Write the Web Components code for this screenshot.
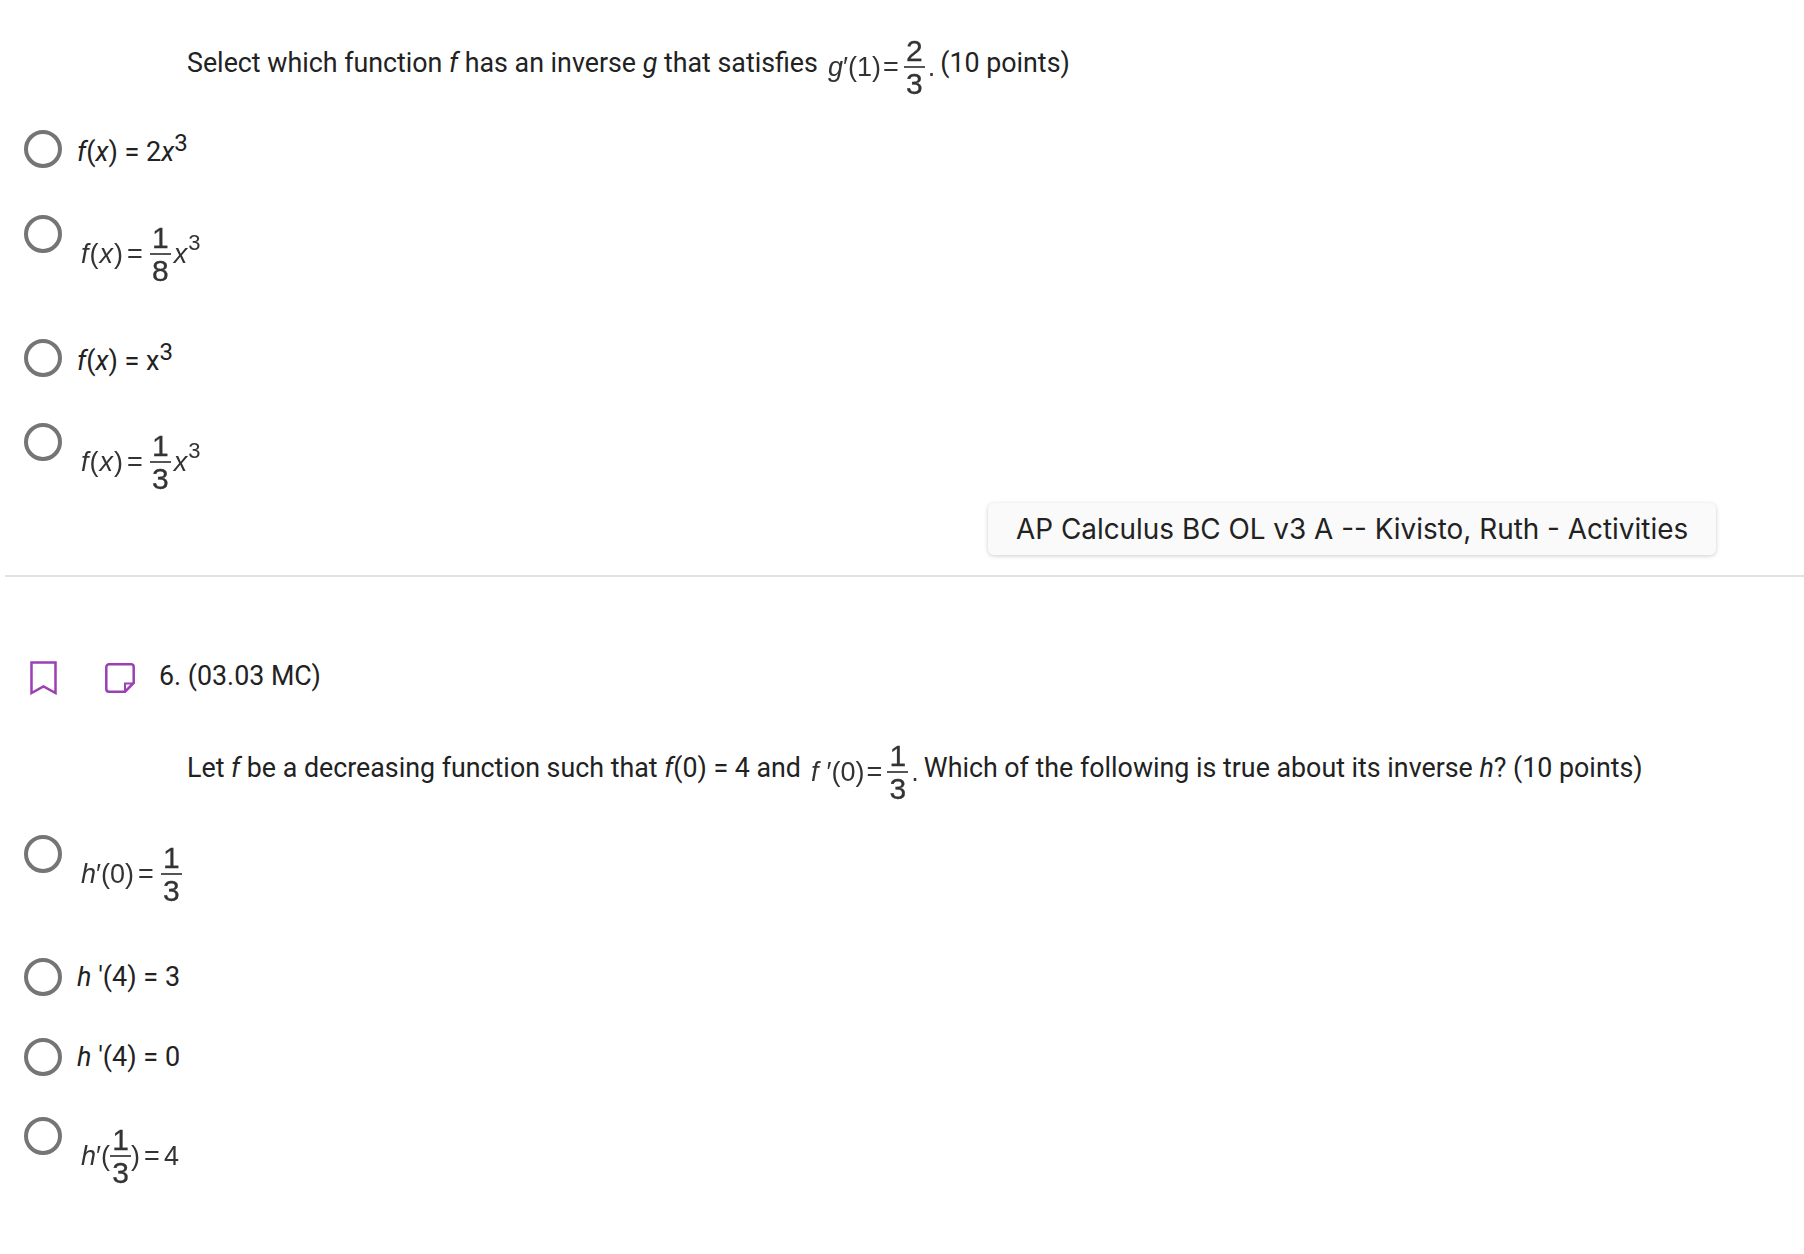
<!DOCTYPE html>
<html lang="en">
<head>
<meta charset="utf-8">
<title>Quiz</title>
<style>
	html, body { margin: 0; background: #fff; }
	body { font-family: Roboto, "Liberation Sans", sans-serif; color: #222; }
	main { display: flex; flex-direction: column; padding-top: 36px; }
</style>
</head>
<body>
<main>
	<q-prompt>
		<span>Select which function <i>f</i> has an inverse <i>g</i> that satisfies</span>
		<m-eq slot="eq"><i>g</i><span>′(1)</span><span class="eq">=</span><m-frac top="2" bottom="3"></m-frac><span>.</span></m-eq>
		<span slot="after">(10 points)</span>
	</q-prompt>

	<q-option style="--gap:47px;--nudge:3px"><i>f</i>(<i>x</i>) = 2<i>x</i><sup>3</sup></q-option>
	<q-option style="--gap:54px;--eq-track:1px;--eq-gap:3px" math><m-eq><i>f</i><span>(<i>x</i>)</span><span class="eq">=</span><m-frac top="1" bottom="8"></m-frac><i>x</i><sup>3</sup></m-eq></q-option>
	<q-option style="--gap:46px;--nudge:3px"><i>f</i>(<i>x</i>) = x<sup>3</sup></q-option>
	<q-option style="--gap:10px;--eq-track:1px;--eq-gap:3px" math><m-eq><i>f</i><span>(<i>x</i>)</span><span class="eq">=</span><m-frac top="1" bottom="3"></m-frac><i>x</i><sup>3</sup></m-eq></q-option>

	<course-chip>AP Calculus BC OL v3 A -- Kivisto, Ruth - Activities</course-chip>
	<q-divider></q-divider>
	<q-header>6. (03.03 MC)</q-header>

	<q-prompt>
		<span>Let <i>f</i> be a decreasing function such that <i>f</i>(0) = 4 and</span>
		<m-eq slot="eq"><i style="margin-right:8px">f</i><span>′(0)</span><span class="eq">=</span><m-frac top="1" bottom="3"></m-frac><span>.</span></m-eq>
		<span slot="after">Which of the following is true about its inverse <i>h</i>? (10 points)</span>
	</q-prompt>

	<q-option style="--gap:53px;--eq-gap:4px" math><m-eq><i>h</i><span>′(0)</span><span class="eq">=</span><m-frac top="1" bottom="3"></m-frac></m-eq></q-option>
	<q-option style="--gap:42px"><i>h</i> '(4) = 3</q-option>
	<q-option style="--gap:41px"><i>h</i> '(4) = 0</q-option>
	<q-option style="--eq-gap:4px" math><m-eq><i>h</i><span>′(</span><m-frac top="1" bottom="3" tight></m-frac><span>)</span><span class="eq">=</span><span>4</span></m-eq></q-option>
</main>

<script>
class MFrac extends HTMLElement {
	connectedCallback() {
		this.attachShadow( { mode: 'open' } )
		this.shadowRoot.innerHTML = `
			<style>
				:host {
					display: inline-flex;
					flex-direction: column;
					align-items: center;
					margin: 0 3px;
					font-size: 30px;
					line-height: 29px;
					letter-spacing: 0;
					-webkit-text-stroke: 0.3px currentColor;
				}
				:host([tight]) { margin: 0; }
				.line {
					align-self: stretch;
					height: 2px;
					min-width: 21px;
					background: #555;
					margin: 1px 0;
				}
			</style>
			<span>${this.getAttribute('top')}</span>
			<div class="line"></div>
			<span>${this.getAttribute('bottom')}</span>
		`
	}
}
customElements.define( 'm-frac', MFrac )

class MEq extends HTMLElement {
	constructor() {
		super()
		this.attachShadow( { mode: 'open' } ).innerHTML = `
			<style>
				:host {
					display: inline-flex;
					align-items: center;
					font-family: "Liberation Sans", Arial, sans-serif;
					font-size: 27px;
					letter-spacing: var(--eq-track, 0);
					color: #333;
					filter: blur(0.4px);
					white-space: pre;
				}
				::slotted(.eq) { margin: 0 var(--eq-gap, 2px); }
				::slotted(sup) {
					font-size: 22px;
					line-height: 0;
					margin: -22px 0 0 0;
				}
			</style>
			<slot></slot>
		`
	}
}
customElements.define( 'm-eq', MEq )

class QPrompt extends HTMLElement {
	constructor() {
		super()
		this.attachShadow( { mode: 'open' } ).innerHTML = `
			<style>
				:host {
					display: flex;
					align-items: center;
					padding-left: 187px;
					margin-bottom: 32px;
					font-size: 26.8px;
					white-space: nowrap;
					color: #222;
				}
				.text { padding-bottom: 9px; }
				.eq { margin: 0 5px 0 10px; display: flex; }
			</style>
			<div class="text"><slot></slot></div>
			<div class="eq"><slot name="eq"></slot></div>
			<div class="text"><slot name="after"></slot></div>
		`
	}
}
customElements.define( 'q-prompt', QPrompt )

class QOption extends HTMLElement {
	constructor() {
		super()
		this.attachShadow( { mode: 'open' } ).innerHTML = `
			<style>
				:host {
					display: flex;
					align-items: center;
					gap: 15px;
					padding-left: 24px;
					margin-bottom: var(--gap, 0);
					font-size: 27px;
					min-height: 38px;
					line-height: 38px;
				}
				:host([math]) { align-items: flex-start; }
				.radio {
					flex: none;
					width: 38px;
					height: 38px;
					box-sizing: border-box;
					border: 4px solid #757575;
					border-radius: 50%;
				}
				.label {
					white-space: nowrap;
					margin: var(--nudge, 0px) 0 calc(-1 * var(--nudge, 0px));
				}
				:host([math]) .label {
					display: flex;
					margin: 8px 0 0 4px;
					line-height: 1;
				}
				::slotted(sup) {
					font-size: 24px;
					line-height: 0;
				}
			</style>
			<div class="radio"></div>
			<div class="label"><slot></slot></div>
		`
	}
}
customElements.define( 'q-option', QOption )

class CourseChip extends HTMLElement {
	constructor() {
		super()
		this.attachShadow( { mode: 'open' } ).innerHTML = `
			<style>
				:host {
					display: block;
					align-self: flex-end;
					margin: 0 88px 20px 0;
					width: 728px;
					height: 52px;
					box-sizing: border-box;
					padding-left: 28px;
					line-height: 52px;
					font-family: Inter, "Liberation Sans", sans-serif;
					font-size: 27.9px;
					color: #222;
					background: #fafafa;
					border-radius: 6px;
					box-shadow: 0 1px 4px rgba(0, 0, 0, 0.2);
					white-space: nowrap;
				}
			</style>
			<slot></slot>
		`
	}
}
customElements.define( 'course-chip', CourseChip )

class QDivider extends HTMLElement {
	constructor() {
		super()
		this.attachShadow( { mode: 'open' } ).innerHTML = `
			<style>
				:host {
					display: block;
					height: 2px;
					margin: 0 0 84px 5px;
					background: #e2e2e2;
				}
			</style>
		`
	}
}
customElements.define( 'q-divider', QDivider )

class QHeader extends HTMLElement {
	constructor() {
		super()
		this.attachShadow( { mode: 'open' } ).innerHTML = `
			<style>
				:host {
					display: flex;
					align-items: center;
					height: 34px;
					padding-left: 30px;
					margin-bottom: 46px;
					font-size: 26.8px;
					color: #222;
				}
				svg { display: block; flex: none; }
				.note { margin: 0 24px 0 48px; }
				.title { margin-top: -4px; }
			</style>
			<svg width="27" height="34" viewBox="0 0 27 34" fill="none">
				<path d="M1.5 1.5H25.5V32L13.5 25.5L1.5 32Z" stroke="#9c3fb5" stroke-width="2.5"/>
			</svg>
			<svg class="note" width="30" height="30" viewBox="0 0 30 30" fill="none">
				<path d="M4 1.3H26A2.7 2.7 0 0 1 28.7 4V20L20 28.7H4A2.7 2.7 0 0 1 1.3 26V4A2.7 2.7 0 0 1 4 1.3Z" stroke="#9c3fb5" stroke-width="2.5"/>
				<path d="M20 28V20.5H28" stroke="#9c3fb5" stroke-width="2"/>
			</svg>
			<span class="title"><slot></slot></span>
		`
	}
}
customElements.define( 'q-header', QHeader )
</script>
</body>
</html>
